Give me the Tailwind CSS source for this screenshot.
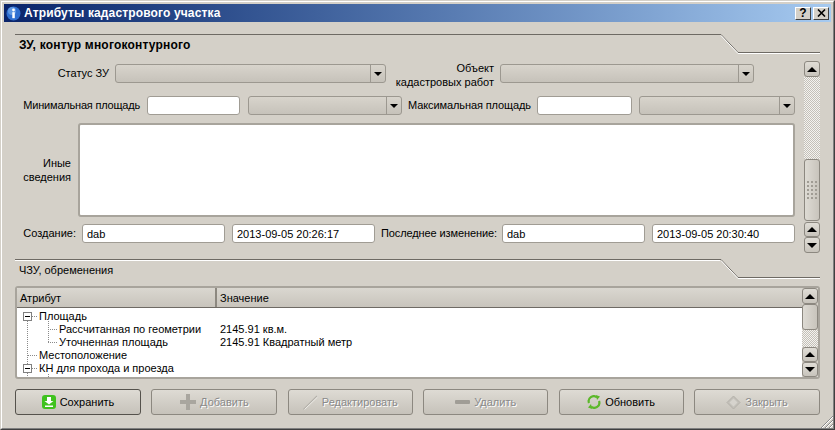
<!DOCTYPE html>
<html>
<head>
<meta charset="UTF-8">
<title>Атрибуты кадастрового участка</title>
<script src="https://cdn.jsdelivr.net/npm/@tailwindcss/browser@4"></script>
</head>
<body class="bg-[#d4d0c8]">
<div class="w-[835px] h-[430px] overflow-hidden whitespace-nowrap border-t border-l border-t-[#d4d0c8] border-l-[#d4d0c8] border-r border-b border-r-[#404040] border-b-[#404040] bg-[#d4d0c8] font-['Liberation_Sans',sans-serif] text-[11px] leading-[13px] text-black">
  <div class="relative h-full border-t border-l border-t-white border-l-white border-r border-b border-r-[#808080] border-b-[#808080] pt-[2px] pl-[2px] pr-[1px]">

    <!-- title bar -->
    <div class="flex items-center h-[18px] mr-[1px] pl-[2px] pr-[2px] bg-linear-to-r from-[#0a246a] to-[#a6caf0]">
      <svg width="15" height="15" viewBox="0 0 15 15" class="shrink-0">
        <circle cx="7.5" cy="7.5" r="7" fill="#2f6fd0"/>
        <circle cx="6" cy="5" r="4" fill="#7fb2ee" opacity="0.6"/>
        <circle cx="7.5" cy="4" r="1.4" fill="#fff"/>
        <rect x="6.3" y="6.2" width="2.5" height="6" fill="#fff"/>
      </svg>
      <span class="ml-[3px] font-bold text-white text-[12px] tracking-[0.14px]">Атрибуты кадастрового участка</span>
      <div class="ml-auto flex gap-[2px]">
        <div class="w-[16px] h-[13px] bg-[#d4d0c8] border border-t-white border-l-white border-r-[#404040] border-b-[#404040] flex items-center justify-center font-bold text-black text-[12px] leading-none">?</div>
        <div class="w-[16px] h-[13px] bg-[#d4d0c8] border border-t-white border-l-white border-r-[#404040] border-b-[#404040] flex items-center justify-center">
          <svg width="9" height="8" viewBox="0 0 9 8"><path d="M1 0.5 L8 7.5 M8 0.5 L1 7.5" stroke="#000" stroke-width="1.6"/></svg>
        </div>
      </div>
    </div>

    <div class="pl-[11px] pr-[12px] pt-[12px]">
      <!-- section 1 -->
      <div class="relative h-[27px]">
        <svg width="805" height="20" class="absolute left-0 top-0">
          <path d="M0 0.5 H706 L723 18.5 H805" fill="none" stroke="#6e6a64"/>
          <path d="M706 1.5 L723 19.5 H805" fill="none" stroke="#fff"/>
        </svg>
        <div class="pl-[4px] pt-[5px] font-bold text-[12px] tracking-[0.2px]">ЗУ, контур многоконтурного</div>
      </div>

      <div class="flex h-[192px]">
        <div class="w-[780px] pt-[3px]">
          <!-- row 1 -->
          <div class="flex items-center h-[19px]">
            <div class="w-[94px] text-right">Статус ЗУ</div>
            <div class="ml-[6px] w-[271px] h-full flex rounded-[3px] border border-[#9c9890] bg-linear-to-b from-[#d8d4cc] to-[#c6c2ba]">
              <div class="flex-1"></div>
              <div class="w-[15px] border-l border-[#9c9890] flex items-center justify-center"><div class="w-0 h-0 border-x-[4px] border-x-transparent border-t-[4px] border-t-black"></div></div>
            </div>
            <div class="w-[108px] text-right leading-[14px] relative top-[1px]">Объект<br>кадастровых работ</div>
            <div class="ml-[6px] w-[254px] h-full flex rounded-[3px] border border-[#9c9890] bg-linear-to-b from-[#d8d4cc] to-[#c6c2ba]">
              <div class="flex-1"></div>
              <div class="w-[15px] border-l border-[#9c9890] flex items-center justify-center"><div class="w-0 h-0 border-x-[4px] border-x-transparent border-t-[4px] border-t-black"></div></div>
            </div>
          </div>
          <!-- row 2 -->
          <div class="flex items-center h-[19px] mt-[13px]">
            <div class="w-[125px] text-right tracking-[-0.2px]">Минимальная площадь</div>
            <input class="ml-[7px] w-[93px] h-full bg-white rounded-[3px] border border-[#a09c94]">
            <div class="ml-[8px] w-[154px] h-full flex rounded-[3px] border border-[#9c9890] bg-linear-to-b from-[#d8d4cc] to-[#c6c2ba]">
              <div class="flex-1"></div>
              <div class="w-[15px] border-l border-[#9c9890] flex items-center justify-center"><div class="w-0 h-0 border-x-[4px] border-x-transparent border-t-[4px] border-t-black"></div></div>
            </div>
            <div class="w-[129px] text-right tracking-[-0.1px]">Максимальная площадь</div>
            <input class="ml-[6px] w-[95px] h-full bg-white rounded-[3px] border border-[#a09c94]">
            <div class="ml-[7px] w-[156px] h-full flex rounded-[3px] border border-[#9c9890] bg-linear-to-b from-[#d8d4cc] to-[#c6c2ba]">
              <div class="flex-1"></div>
              <div class="w-[15px] border-l border-[#9c9890] flex items-center justify-center"><div class="w-0 h-0 border-x-[4px] border-x-transparent border-t-[4px] border-t-black"></div></div>
            </div>
          </div>
          <!-- other info -->
          <div class="flex items-center h-[94px] mt-[8px]">
            <div class="w-[56px] text-right leading-[14px]">Иные<br>сведения</div>
            <textarea class="ml-[7px] w-[717px] h-full bg-white rounded-[3px] border-2 border-[#a8a49c] resize-none"></textarea>
          </div>
          <!-- row 4 -->
          <div class="flex items-center h-[19px] mt-[7px]">
            <div class="w-[61px] text-right">Создание:</div>
            <input value="dab" class="ml-[6px] w-[143px] h-full bg-white rounded-[3px] border border-[#a09c94] px-[4px]">
            <input value="2013-09-05 20:26:17" class="ml-[7px] w-[143px] h-full bg-white rounded-[3px] border border-[#a09c94] px-[4px]">
            <div class="w-[122px] text-right tracking-[-0.1px]">Последнее изменение:</div>
            <input value="dab" class="ml-[5px] w-[143px] h-full bg-white rounded-[3px] border border-[#a09c94] px-[4px]">
            <input value="2013-09-05 20:30:40" class="ml-[7px] w-[143px] h-full bg-white rounded-[3px] border border-[#a09c94] px-[4px]">
          </div>
        </div>
        <!-- form scrollbar -->
        <div class="ml-[9px] w-[16px] flex flex-col">
          <div class="h-[16px] rounded-[3px] border border-[#8c8880] bg-linear-to-b from-[#e0ddd6] to-[#c8c4bc] flex items-center justify-center"><div class="w-0 h-0 border-x-[5px] border-x-transparent border-b-[5px] border-b-black"></div></div>
          <div class="h-[82px] bg-[repeating-conic-gradient(#c4c0b8_0_25%,#f4f3f0_0_50%)] bg-[length:2px_2px]"></div>
          <div class="h-[62px] rounded-[3px] border border-[#8c8880] bg-linear-to-r from-[#dedbd4] to-[#c8c4bc] flex items-center justify-center">
            <svg width="10" height="18" viewBox="0 0 10 18" fill="#a09c94"><path d="M0 0h2v2H0zM4 0h2v2H4zM8 0h2v2H8zM0 4h2v2H0zM4 4h2v2H4zM8 4h2v2H8zM0 8h2v2H0zM4 8h2v2H4zM8 8h2v2H8zM0 12h2v2H0zM4 12h2v2H4zM8 12h2v2H8zM0 16h2v2H0zM4 16h2v2H4zM8 16h2v2H8z"/></svg>
          </div>
          <div class="mt-[1px] h-[15px] rounded-[3px] border border-[#8c8880] bg-linear-to-b from-[#e0ddd6] to-[#c8c4bc] flex items-center justify-center"><div class="w-0 h-0 border-x-[5px] border-x-transparent border-b-[5px] border-b-black"></div></div>
          <div class="h-[16px] rounded-[3px] border border-[#8c8880] bg-linear-to-b from-[#e0ddd6] to-[#c8c4bc] flex items-center justify-center"><div class="w-0 h-0 border-x-[5px] border-x-transparent border-t-[5px] border-t-black"></div></div>
        </div>
      </div>

      <!-- section 2 -->
      <div class="relative h-[27px] mt-[6px]">
        <svg width="805" height="20" class="absolute left-0 top-0">
          <path d="M0 0.5 H706 L723 18.5 H805" fill="none" stroke="#6e6a64"/>
          <path d="M0 1.5 H705 M706 1.5 L723 19.5 H805" fill="none" stroke="#fff"/>
        </svg>
        <div class="pl-[4px] pt-[5px]">ЧЗУ, обременения</div>
      </div>

      <!-- tree -->
      <div class="h-[93px] flex rounded-[3px] border-2 border-[#a8a49c] overflow-hidden bg-white">
        <div class="w-[785px] flex flex-col">
          <div class="flex h-[20px] shrink-0 border-b border-[#6e6a64]">
            <div class="w-[200px] h-full pl-[3px] pt-[2px] flex items-center border-r-2 border-[#8c8880] bg-linear-to-b from-[#dad7d0] to-[#c8c4bc]">Атрибут</div>
            <div class="flex-1 h-full pl-[3px] pt-[2px] flex items-center bg-linear-to-b from-[#dad7d0] to-[#c8c4bc]">Значение</div>
          </div>
          <div class="relative flex-1 overflow-hidden">
            <svg width="60" height="80" class="absolute left-0 top-0">
              <g fill="none" stroke="#8a8a8a" stroke-dasharray="1 1">
                <path d="M10.5 13 V80"/>
                <path d="M31.5 13 V34"/>
                <path d="M31 21.5 H40 M31 34.5 H40"/>
                <path d="M11 47.5 H20 M15 8.5 H20 M15 60.5 H20"/>
                <path d="M31.5 66 V80"/>
              </g>
              <g fill="#fff" stroke="#808080">
                <rect x="6.5" y="4.5" width="8" height="8"/>
                <rect x="6.5" y="56.5" width="8" height="8"/>
              </g>
              <path d="M8 8.5 H13 M8 60.5 H13" stroke="#000"/>
            </svg>
            <div class="flex h-[13px] mt-[2px]"><div class="w-[201px] pl-[22px]">Площадь</div></div>
            <div class="flex h-[13px]"><div class="w-[201px] pl-[42px]">Рассчитанная по геометрии</div><div class="pl-[2px]">2145.91 кв.м.</div></div>
            <div class="flex h-[13px]"><div class="w-[201px] pl-[42px]">Уточненная площадь</div><div class="pl-[2px]">2145.91 Квадратный метр</div></div>
            <div class="flex h-[13px]"><div class="w-[201px] pl-[22px]">Местоположение</div></div>
            <div class="flex h-[13px]"><div class="w-[201px] pl-[22px]">КН для прохода и проезда</div></div>
            <div class="flex h-[13px]"><div class="w-[201px] pl-[42px]">КН</div><div class="pl-[2px]">50:43:0440000:155</div></div>
          </div>
        </div>
        <div class="w-[16px] flex flex-col bg-[#d4d0c8]">
          <div class="h-[16px] rounded-[3px] border border-[#8c8880] bg-linear-to-b from-[#e0ddd6] to-[#c8c4bc] flex items-center justify-center"><div class="w-0 h-0 border-x-[5px] border-x-transparent border-b-[5px] border-b-black"></div></div>
          <div class="h-[26px] rounded-[3px] border border-[#8c8880] bg-linear-to-r from-[#dedbd4] to-[#c8c4bc]"></div>
          <div class="h-[17px] bg-[repeating-conic-gradient(#c4c0b8_0_25%,#f4f3f0_0_50%)] bg-[length:2px_2px]"></div>
          <div class="h-[15px] rounded-[3px] border border-[#8c8880] bg-linear-to-b from-[#e0ddd6] to-[#c8c4bc] flex items-center justify-center"><div class="w-0 h-0 border-x-[5px] border-x-transparent border-b-[5px] border-b-black"></div></div>
          <div class="h-[15px] rounded-[3px] border border-[#8c8880] bg-linear-to-b from-[#e0ddd6] to-[#c8c4bc] flex items-center justify-center"><div class="w-0 h-0 border-x-[5px] border-x-transparent border-t-[5px] border-t-black"></div></div>
        </div>
      </div>

      <!-- buttons -->
      <div class="flex justify-between mt-[10px]">
        <button class="w-[126px] h-[26px] flex items-center justify-center gap-[4px] rounded-[3px] border border-[#55524c] bg-linear-to-b from-[#dedbd4] to-[#c6c2ba]">
          <svg width="14" height="14" viewBox="0 0 14 14"><rect width="14" height="14" rx="3" fill="#3fc21e"/><path d="M5 2h4v4h2.500L7 9.500 2.500 6H5z M3 10.500h8V12H3z" fill="#fff"/></svg>
          Сохранить
        </button>
        <button disabled class="w-[126px] h-[26px] flex items-center justify-center gap-[4px] rounded-[3px] border border-[#8c8880] bg-linear-to-b from-[#dedbd4] to-[#c6c2ba] text-[#8a8a8a] [text-shadow:1px_1px_0_#fff]">
          <svg width="16" height="16" viewBox="0 0 16 16"><path d="M6 0h4v6h6v4h-6v6H6v-6H0V6h6z" fill="#a9a69f"/></svg>
          Добавить
        </button>
        <button disabled class="w-[125px] h-[26px] flex items-center justify-center gap-[4px] rounded-[3px] border border-[#8c8880] bg-linear-to-b from-[#dedbd4] to-[#c6c2ba] text-[#8a8a8a] [text-shadow:1px_1px_0_#fff]">
          <svg width="15" height="15" viewBox="0 0 15 15"><path d="M0.500 14.500 L14 1" stroke="#b4b1aa" stroke-width="1.200"/><path d="M1.500 14.500 L14.500 2" stroke="#eeece8"/></svg>
          Редактировать
        </button>
        <button disabled class="w-[125px] h-[26px] flex items-center justify-center gap-[4px] rounded-[3px] border border-[#8c8880] bg-linear-to-b from-[#dedbd4] to-[#c6c2ba] text-[#8a8a8a] [text-shadow:1px_1px_0_#fff]">
          <svg width="15" height="4" viewBox="0 0 15 4"><rect width="15" height="4" rx="1" fill="#a09d96"/></svg>
          Удалить
        </button>
        <button class="w-[125px] h-[26px] flex items-center justify-center gap-[4px] rounded-[3px] border border-[#8c8880] bg-linear-to-b from-[#dedbd4] to-[#c6c2ba]">
          <svg width="14" height="14" viewBox="0 0 14 14" fill="none"><path d="M2 8 A5 5 0 0 1 10 2.500" stroke="#5cb82a" stroke-width="2.200"/><path d="M12 6 A5 5 0 0 1 4 11.500" stroke="#5cb82a" stroke-width="2.200"/><path d="M9 0 L13 1.500 L10 5z M5 14 L1 12.500 L4 9z" fill="#5cb82a"/></svg>
          Обновить
        </button>
        <button disabled class="w-[126px] h-[26px] flex items-center justify-center gap-[4px] rounded-[3px] border border-[#8c8880] bg-linear-to-b from-[#dedbd4] to-[#c6c2ba] text-[#8a8a8a] [text-shadow:1px_1px_0_#fff]">
          <svg width="15" height="15" viewBox="0 0 15 15"><path d="M7.500 1 L14 7.500 L7.500 14 L1 7.500z" fill="#c3c0b9" stroke="#b4b1aa" stroke-linejoin="round"/><path d="M7.500 3.500 L11.500 7.500 L7.500 11.500 L3.500 7.500z" fill="#d6d3cd"/></svg>
          Закрыть
        </button>
      </div>
    </div>

    <!-- size grip -->
    <svg width="13" height="13" class="absolute right-0 bottom-0">
      <path d="M13 1 L1 13 M13 5 L5 13 M13 9 L9 13" stroke="#8a8a8a" fill="none"/>
      <path d="M13 2 L2 13 M13 6 L6 13 M13 10 L10 13" stroke="#fff" fill="none"/>
    </svg>
  </div>
</div>
</body>
</html>
